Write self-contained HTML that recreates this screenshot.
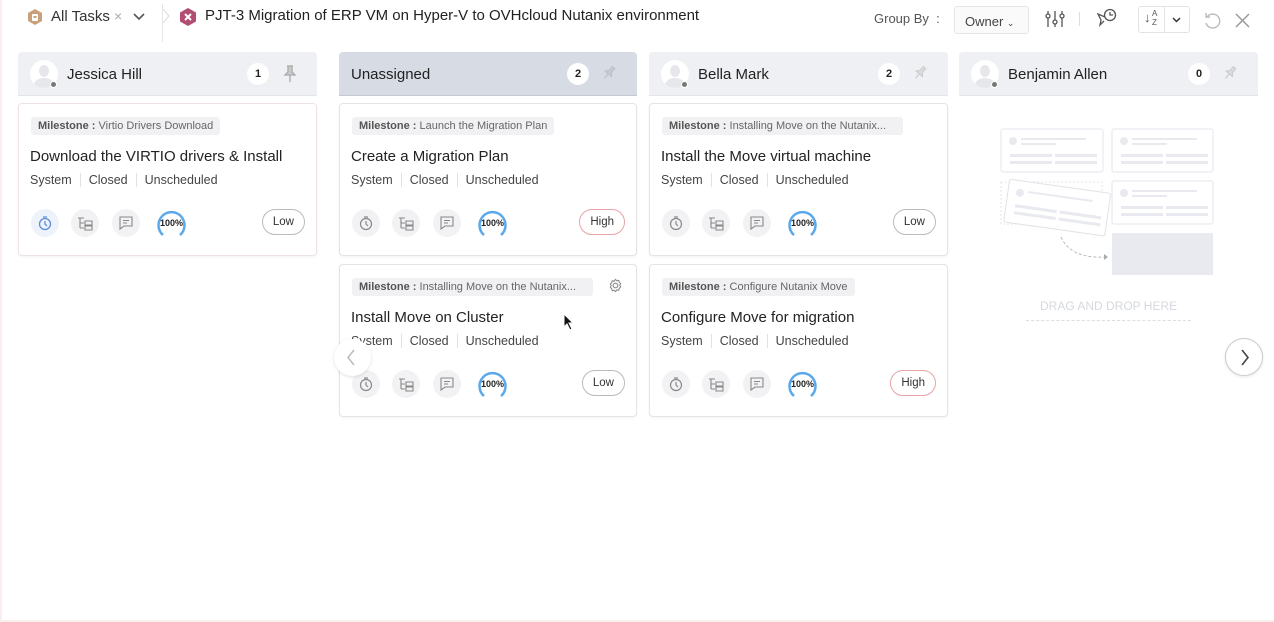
<!DOCTYPE html>
<html><head><meta charset="utf-8"><style>
*{box-sizing:border-box;margin:0;padding:0}
body{width:1274px;height:622px;background:#fff;font-family:"Liberation Sans",sans-serif;color:#333;position:relative;overflow:hidden}
.frame{position:absolute;left:0;top:0;width:1274px;height:622px;border-left:2px solid #fbeeee;border-bottom:2px solid #fbeeee;pointer-events:none}
.abs{position:absolute}
.colh{position:absolute;top:52px;height:44px;width:299px;background:#eff0f3;border-radius:4px 4px 0 0;border-bottom:1px solid #e2e4ea}
.colh.un{background:#d7dbe4;border-bottom:1px solid #c3c8d3}
.colh .nm{position:absolute;left:49px;top:14px;font-size:15px;color:#222}
.colh.un .nm{left:12px}
.av{position:absolute;left:12px;top:8px;width:28px;height:28px;border-radius:50%;background:#fff;overflow:hidden}
.av:before{content:"";position:absolute;left:9px;top:5px;width:10px;height:12px;border-radius:50%;background:#e6e7ea}
.av:after{content:"";position:absolute;left:4px;top:18px;width:20px;height:14px;border-radius:50%;background:#e6e7ea}
.dot{position:absolute;left:32px;top:29px;width:7px;height:7px;border-radius:50%;background:#777;border:1px solid #fff}
.cnt{position:absolute;right:48px;top:11px;width:22px;height:22px;border-radius:50%;background:#fff;font-size:11px;font-weight:bold;text-align:center;line-height:22px;color:#222}
.pin{position:absolute;right:20px;top:13px}
.card{position:absolute;width:299px;height:153px;background:#fff;border:1px solid #e4e4e7;border-radius:4px;box-shadow:0 1px 2px rgba(0,0,0,.05)}
.ms{position:absolute;left:12px;top:13px;height:18px;background:#f1f1f3;border-radius:3px;font-size:11px;color:#666;padding:0 7px;line-height:18px;white-space:nowrap}
.ms b{color:#555;font-weight:bold}
.tt{position:absolute;left:11px;top:44px;font-size:15px;color:#222}
.mt{position:absolute;left:11px;top:69px;font-size:12.5px;color:#444;white-space:nowrap}
.mt span{padding:0 8px;border-left:1px solid #e2e2e2}
.mt span:first-child{padding-left:0;border:none}
.ic{position:absolute;top:105px;width:28px;height:28px;border-radius:50%;background:#f2f2f4}
.ic svg{position:absolute;left:6px;top:6px}
.ring{position:absolute;left:136px;top:103px;width:33px;height:33px}
.ring span{position:absolute;left:0;top:11px;width:33px;text-align:center;font-size:9px;font-weight:bold;color:#222}
.pr{position:absolute;right:11px;top:105px;height:26px;border:1px solid #bbb;border-radius:13px;font-size:11.5px;padding:0 10px;line-height:24px;color:#333}
.pr.h{border-color:#e9a3a6}
</style></head><body>

<!-- top bar -->
<svg class="abs" style="left:26px;top:8px" width="18" height="18" viewBox="0 0 18 18"><path d="M9 1l7 4v8l-7 4-7-4V5z" fill="#c9a079"/><rect x="6" y="6" width="6" height="7" rx="1" fill="#fff"/><rect x="7.5" y="8" width="3" height="2" fill="#c9a079"/></svg>
<div class="abs" style="left:51px;top:8px;font-size:15px;color:#333">All Tasks</div>
<div class="abs" style="left:114px;top:8px;font-size:14px;color:#aaa">×</div>
<svg class="abs" style="left:133px;top:13px" width="12" height="8"><path d="M1 1l5 5 5-5" stroke="#555" stroke-width="1.6" fill="none"/></svg>
<div class="abs" style="left:162px;top:4px;width:1px;height:38px;background:#e6e6e6"></div>
<svg class="abs" style="left:162px;top:8px" width="8" height="16"><path d="M1 1l6 7-6 7" stroke="#ddd" fill="none"/></svg>
<svg class="abs" style="left:178px;top:7px" width="20" height="20" viewBox="0 0 20 20"><path d="M10 1l8 4.5v9L10 19l-8-4.5v-9z" fill="#b24d73"/><path d="M7 7l6 6M13 7l-6 6" stroke="#fff" stroke-width="2"/></svg>
<div class="abs" style="left:205px;top:7px;font-size:15px;color:#222">PJT-3 Migration of ERP VM on Hyper-V to OVHcloud Nutanix environment</div>

<div class="abs" style="left:874px;top:11px;font-size:13px;color:#555">Group By &nbsp;:</div>
<div class="abs" style="left:954px;top:6px;width:75px;height:28px;border:1px solid #e6e6e6;border-radius:3px;background:#fafafa;font-size:13px;color:#444;padding:7px 0 0 10px">Owner <span style="font-size:9px">⌄</span></div>
<svg class="abs" style="left:1045px;top:10px" width="20" height="18" viewBox="0 0 20 18"><g stroke="#555" stroke-width="1.3" fill="none"><path d="M3 1v16M10 1v16M17 1v16"/><circle cx="3" cy="6" r="2" fill="#fff"/><circle cx="10" cy="12" r="2" fill="#fff"/><circle cx="17" cy="6" r="2" fill="#fff"/></g></svg>
<div class="abs" style="left:1079px;top:12px;width:1px;height:14px;background:#ddd"></div>
<svg class="abs" style="left:1096px;top:8px" width="22" height="20" viewBox="0 0 22 20"><g stroke="#555" stroke-width="1.3" fill="none"><circle cx="14" cy="7" r="5.5"/><path d="M14 4v3h3"/><path d="M9 9L2 6l3 6-1 5 4-4"/></g></svg>
<div class="abs" style="left:1138px;top:6px;width:52px;height:27px;border:1px solid #e3e3e3;border-radius:3px"></div>
<div class="abs" style="left:1164px;top:6px;width:1px;height:27px;background:#e3e3e3"></div>
<div class="abs" style="left:1144px;top:10px;font-size:13px;color:#555">↓</div>
<div class="abs" style="left:1152px;top:9px;font-size:8px;line-height:9px;color:#555">A<br>Z</div>
<svg class="abs" style="left:1172px;top:17px" width="9" height="6"><path d="M1 1l3.5 3.5L8 1" stroke="#333" stroke-width="1.5" fill="none"/></svg>
<svg class="abs" style="left:1203px;top:12px" width="18" height="18" viewBox="0 0 18 18"><path d="M4 5a7 7 0 1 1-1 6" stroke="#bbb" stroke-width="1.4" fill="none"/><path d="M3 1v4h4" stroke="#bbb" stroke-width="1.4" fill="none"/></svg>
<svg class="abs" style="left:1235px;top:13px" width="15" height="15"><path d="M1 1l13 13M14 1L1 14" stroke="#999" stroke-width="1.5"/></svg>

<!-- column headers -->
<div class="colh" style="left:18px"><div class="av"></div><div class="dot"></div><div class="nm">Jessica Hill</div><div class="cnt">1</div><svg class="pin" width="14" height="18" viewBox="0 0 14 18"><path d="M4 1h6M5 1v6L2 10h10L9 7V1M7 10v7" stroke="#aaa" stroke-width="1.3" fill="#ccc"/></svg></div>
<div class="colh un" style="left:339px;width:298px"><div class="nm">Unassigned</div><div class="cnt">2</div><svg class="pin" width="16" height="16" viewBox="0 0 16 16"><g transform="rotate(40 8 8)"><path d="M6 1h4M6.5 1v5L4 9h8L9.5 6V1M8 9v6" stroke="#bcc0c8" stroke-width="1.2" fill="#c7cbd3"/></g></svg></div>
<div class="colh" style="left:649px"><div class="av"></div><div class="dot"></div><div class="nm">Bella Mark</div><div class="cnt">2</div><svg class="pin" width="16" height="16" viewBox="0 0 16 16"><g transform="rotate(40 8 8)"><path d="M6 1h4M6.5 1v5L4 9h8L9.5 6V1M8 9v6" stroke="#ccc" stroke-width="1.2" fill="#ddd"/></g></svg></div>
<div class="colh" style="left:959px"><div class="av"></div><div class="dot"></div><div class="nm">Benjamin Allen</div><div class="cnt">0</div><svg class="pin" width="16" height="16" viewBox="0 0 16 16"><g transform="rotate(40 8 8)"><path d="M6 1h4M6.5 1v5L4 9h8L9.5 6V1M8 9v6" stroke="#ccc" stroke-width="1.2" fill="#ddd"/></g></svg></div>

<div class="card" style="left:18px;top:103px;border-color:#eee3e3">
<div class="ms"><b>Milestone :</b> Virtio Drivers Download</div>
<div class="tt">Download the VIRTIO drivers &amp; Install</div>
<div class="mt"><span>System</span><span>Closed</span><span>Unscheduled</span></div>
<div class="ic" style="left:12px;background:#eef3fb"><svg width="16" height="16" viewBox="0 0 16 16"><circle cx="8" cy="9" r="5.5" stroke="#5b8fd9" stroke-width="1.3" fill="none"/><path d="M8 6v3l2 2M6 2h4" stroke="#5b8fd9" stroke-width="1.3" fill="none"/></svg></div>
<div class="ic" style="left:52px"><svg width="16" height="16" viewBox="0 0 16 16"><path d="M1 3h6M3 3v10M3 8h4M3 13h4M8 6h7v4H8zM8 11h7v4H8z" stroke="#888" stroke-width="1.1" fill="none"/></svg></div>
<div class="ic" style="left:93px"><svg width="16" height="16" viewBox="0 0 16 16"><path d="M2 2h12v9H6l-4 3z" stroke="#888" stroke-width="1.1" fill="none"/><path d="M5 5.5h6M5 8h4" stroke="#888" stroke-width="1.1"/></svg></div>
<div class="ring"><svg width="33" height="33"><path d="M8 28A13 13 0 1 1 25 28" stroke="#5aa9ec" stroke-width="2.5" fill="none"/></svg><span>100%</span></div>
<div class="pr">Low</div>
</div>

<div class="card" style="left:339px;top:103px;width:298px">
<div class="ms"><b>Milestone :</b> Launch the Migration Plan</div>
<div class="tt">Create a Migration Plan</div>
<div class="mt"><span>System</span><span>Closed</span><span>Unscheduled</span></div>
<div class="ic" style="left:12px"><svg width="16" height="16" viewBox="0 0 16 16"><circle cx="8" cy="9" r="5.5" stroke="#888" stroke-width="1.2" fill="none"/><path d="M8 6v3l2 2M6 2h4" stroke="#888" stroke-width="1.2" fill="none"/></svg></div>
<div class="ic" style="left:52px"><svg width="16" height="16" viewBox="0 0 16 16"><path d="M1 3h6M3 3v10M3 8h4M3 13h4M8 6h7v4H8zM8 11h7v4H8z" stroke="#888" stroke-width="1.1" fill="none"/></svg></div>
<div class="ic" style="left:93px"><svg width="16" height="16" viewBox="0 0 16 16"><path d="M2 2h12v9H6l-4 3z" stroke="#888" stroke-width="1.1" fill="none"/><path d="M5 5.5h6M5 8h4" stroke="#888" stroke-width="1.1"/></svg></div>
<div class="ring"><svg width="33" height="33"><path d="M8 28A13 13 0 1 1 25 28" stroke="#5aa9ec" stroke-width="2.5" fill="none"/></svg><span>100%</span></div>
<div class="pr h">High</div>
</div>

<div class="card" style="left:649px;top:103px">
<div class="ms" style="width:241px;overflow:hidden"><b>Milestone :</b> Installing Move on the Nutanix...</div>
<div class="tt">Install the Move virtual machine</div>
<div class="mt"><span>System</span><span>Closed</span><span>Unscheduled</span></div>
<div class="ic" style="left:12px"><svg width="16" height="16" viewBox="0 0 16 16"><circle cx="8" cy="9" r="5.5" stroke="#888" stroke-width="1.2" fill="none"/><path d="M8 6v3l2 2M6 2h4" stroke="#888" stroke-width="1.2" fill="none"/></svg></div>
<div class="ic" style="left:52px"><svg width="16" height="16" viewBox="0 0 16 16"><path d="M1 3h6M3 3v10M3 8h4M3 13h4M8 6h7v4H8zM8 11h7v4H8z" stroke="#888" stroke-width="1.1" fill="none"/></svg></div>
<div class="ic" style="left:93px"><svg width="16" height="16" viewBox="0 0 16 16"><path d="M2 2h12v9H6l-4 3z" stroke="#888" stroke-width="1.1" fill="none"/><path d="M5 5.5h6M5 8h4" stroke="#888" stroke-width="1.1"/></svg></div>
<div class="ring"><svg width="33" height="33"><path d="M8 28A13 13 0 1 1 25 28" stroke="#5aa9ec" stroke-width="2.5" fill="none"/></svg><span>100%</span></div>
<div class="pr">Low</div>
</div>

<div class="card" style="left:339px;top:264px;width:298px">
<div class="ms" style="width:241px;overflow:hidden"><b>Milestone :</b> Installing Move on the Nutanix...</div>
<svg class="abs" style="left:268px;top:13px" width="15" height="15" viewBox="0 0 16 16"><circle cx="8" cy="8" r="2.5" stroke="#888" stroke-width="1.2" fill="none"/><path d="M8 1.5l1.5 1.5 2-.5.5 2 1.5 1.5-1 1.8 1 1.8-1.5 1.5-.5 2-2-.5L8 14.5l-1.5-1.5-2 .5-.5-2L2.5 10l1-1.8-1-1.8L4 5l.5-2 2 .5z" stroke="#888" stroke-width="1.1" fill="none"/></svg>
<div class="tt">Install Move on Cluster</div>
<div class="mt"><span>System</span><span>Closed</span><span>Unscheduled</span></div>
<div class="ic" style="left:12px"><svg width="16" height="16" viewBox="0 0 16 16"><circle cx="8" cy="9" r="5.5" stroke="#888" stroke-width="1.2" fill="none"/><path d="M8 6v3l2 2M6 2h4" stroke="#888" stroke-width="1.2" fill="none"/></svg></div>
<div class="ic" style="left:52px"><svg width="16" height="16" viewBox="0 0 16 16"><path d="M1 3h6M3 3v10M3 8h4M3 13h4M8 6h7v4H8zM8 11h7v4H8z" stroke="#888" stroke-width="1.1" fill="none"/></svg></div>
<div class="ic" style="left:93px"><svg width="16" height="16" viewBox="0 0 16 16"><path d="M2 2h12v9H6l-4 3z" stroke="#888" stroke-width="1.1" fill="none"/><path d="M5 5.5h6M5 8h4" stroke="#888" stroke-width="1.1"/></svg></div>
<div class="ring"><svg width="33" height="33"><path d="M8 28A13 13 0 1 1 25 28" stroke="#5aa9ec" stroke-width="2.5" fill="none"/></svg><span>100%</span></div>
<div class="pr">Low</div>
</div>

<div class="card" style="left:649px;top:264px">
<div class="ms"><b>Milestone :</b> Configure Nutanix Move</div>
<div class="tt">Configure Move for migration</div>
<div class="mt"><span>System</span><span>Closed</span><span>Unscheduled</span></div>
<div class="ic" style="left:12px"><svg width="16" height="16" viewBox="0 0 16 16"><circle cx="8" cy="9" r="5.5" stroke="#888" stroke-width="1.2" fill="none"/><path d="M8 6v3l2 2M6 2h4" stroke="#888" stroke-width="1.2" fill="none"/></svg></div>
<div class="ic" style="left:52px"><svg width="16" height="16" viewBox="0 0 16 16"><path d="M1 3h6M3 3v10M3 8h4M3 13h4M8 6h7v4H8zM8 11h7v4H8z" stroke="#888" stroke-width="1.1" fill="none"/></svg></div>
<div class="ic" style="left:93px"><svg width="16" height="16" viewBox="0 0 16 16"><path d="M2 2h12v9H6l-4 3z" stroke="#888" stroke-width="1.1" fill="none"/><path d="M5 5.5h6M5 8h4" stroke="#888" stroke-width="1.1"/></svg></div>
<div class="ring"><svg width="33" height="33"><path d="M8 28A13 13 0 1 1 25 28" stroke="#5aa9ec" stroke-width="2.5" fill="none"/></svg><span>100%</span></div>
<div class="pr h">High</div>
</div>

<!-- empty state illustration -->
<svg class="abs" style="left:996px;top:124px" width="222" height="155" viewBox="0 0 222 155">
<g fill="#fff" stroke="#e4e6ec">
<rect x="5" y="5" width="102" height="43" rx="2"/><rect x="116" y="5" width="101" height="43" rx="2"/><rect x="116" y="57" width="101" height="43" rx="2"/>
</g>
<rect x="5" y="58" width="101" height="42" fill="none" stroke="#e4e6ec" stroke-dasharray="2 2"/>
<g fill="#e8eaef"><circle cx="17" cy="17" r="4"/><circle cx="128" cy="17" r="4"/><circle cx="128" cy="69" r="4"/>
<rect x="25" y="14" width="65" height="2"/><rect x="25" y="19" width="35" height="2"/><rect x="14" y="30" width="42" height="3"/><rect x="59" y="30" width="42" height="3"/><rect x="14" y="37" width="42" height="3"/><rect x="59" y="37" width="42" height="3"/>
<rect x="136" y="14" width="65" height="2"/><rect x="136" y="19" width="35" height="2"/><rect x="125" y="30" width="42" height="3"/><rect x="170" y="30" width="42" height="3"/><rect x="125" y="37" width="42" height="3"/><rect x="170" y="37" width="42" height="3"/>
<rect x="136" y="66" width="65" height="2"/><rect x="136" y="71" width="35" height="2"/><rect x="125" y="82" width="42" height="3"/><rect x="170" y="82" width="42" height="3"/><rect x="125" y="89" width="42" height="3"/><rect x="170" y="89" width="42" height="3"/>
<rect x="116" y="109" width="101" height="42"/></g>
<g transform="rotate(8 60 85)"><rect x="10" y="62" width="102" height="43" rx="2" fill="#fff" stroke="#e0e2e8"/><circle cx="22" cy="74" r="4" fill="#e8eaef"/><rect x="30" y="71" width="65" height="2" fill="#e8eaef"/><rect x="19" y="86" width="42" height="3" fill="#e8eaef"/><rect x="64" y="86" width="42" height="3" fill="#e8eaef"/><rect x="19" y="93" width="42" height="3" fill="#e8eaef"/><rect x="64" y="93" width="42" height="3" fill="#e8eaef"/></g>
<path d="M65 113q10 22 45 20" stroke="#bbb" stroke-dasharray="3 2" fill="none"/><path d="M108 130l4 3-4 3z" fill="#aaa"/>
</svg>
<div class="abs" style="left:1040px;top:299px;font-size:12px;color:#d5d8df">DRAG AND DROP HERE</div>
<div class="abs" style="left:1026px;top:320px;width:165px;border-top:1px dashed #dcdee3"></div>

<!-- nav arrows -->
<div class="abs" style="left:334px;top:339px;width:37px;height:37px;border-radius:50%;background:#fff;box-shadow:0 1px 3px rgba(0,0,0,.12)"><svg style="position:absolute;left:12px;top:10px" width="10" height="17"><path d="M8 1L2 8.5 8 16" stroke="#bbb" stroke-width="1.5" fill="none"/></svg></div>
<div class="abs" style="left:1225px;top:338px;width:38px;height:38px;border-radius:50%;background:#fff;border:1px solid #ccc;box-shadow:0 1px 3px rgba(0,0,0,.1)"><svg style="position:absolute;left:14px;top:10px" width="10" height="17"><path d="M2 1l6 7.5L2 16" stroke="#444" stroke-width="1.6" fill="none"/></svg></div>

<!-- cursor -->
<svg class="abs" style="left:563px;top:313px" width="12" height="18"><path d="M1 1v13l3-3 3 6 2-1-3-6h4z" fill="#111" stroke="#fff" stroke-width="1"/></svg>
<div class="frame"></div>
</body></html>
